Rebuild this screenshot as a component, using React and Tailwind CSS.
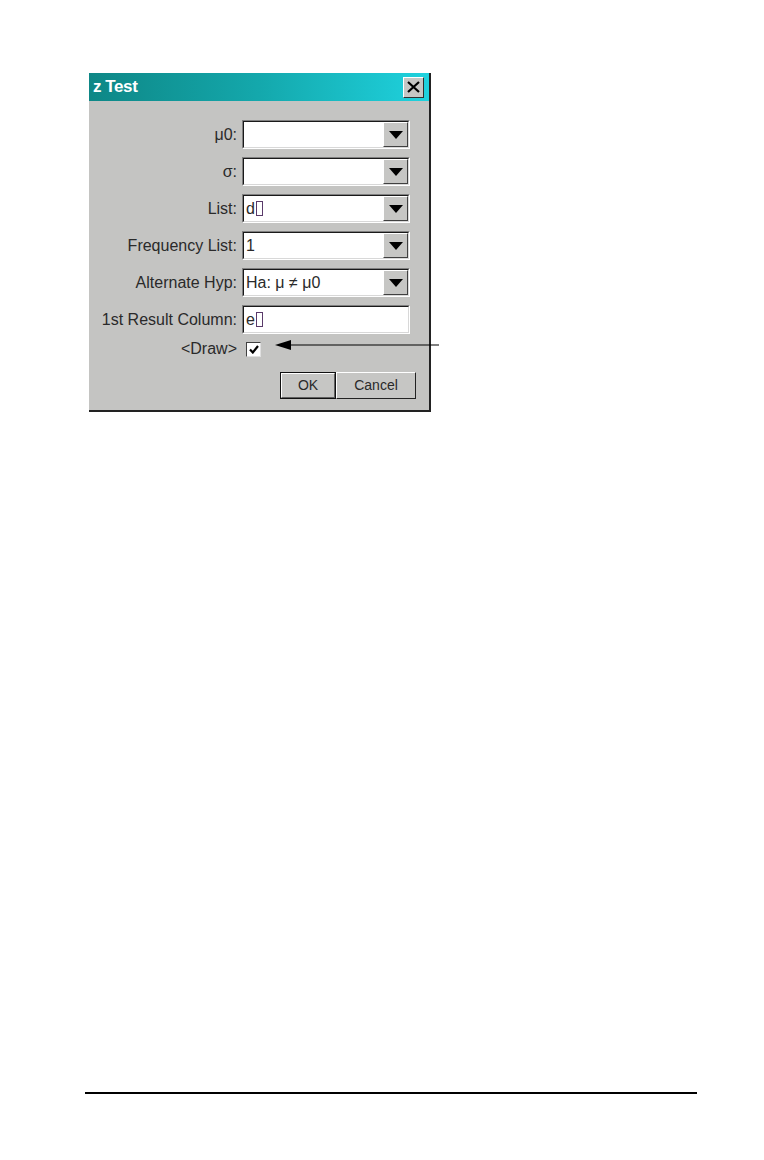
import React from 'react'

const fields = [
  { label: 'μ0:', value: '', dropdown: true },
  { label: 'σ:', value: '', dropdown: true },
  { label: 'List:', value: 'd', cursor: true, dropdown: true },
  { label: 'Frequency List:', value: '1', dropdown: true },
  { label: 'Alternate Hyp:', value: 'Ha: μ ≠ μ0', dropdown: true },
  { label: '1st Result Column:', value: 'e', cursor: true, dropdown: false },
]

function DropButton() {
  return (
    <div className="w-[25px] h-full bg-[#c6c6c4] border border-t-white border-l-white border-b-[#404040] border-r-[#404040] flex items-center justify-center">
      <svg width="14" height="8" viewBox="0 0 14 8">
        <polygon points="0,0 14,0 7,8" fill="#000" />
      </svg>
    </div>
  )
}

function Field({ value, cursor, dropdown }) {
  return (
    <div className="h-[29px] w-[168px] border border-t-[#808080] border-l-[#808080] border-b-white border-r-white">
      <div className="h-full w-full border border-t-[#1a1a1a] border-l-[#1a1a1a] border-b-[#d8d8d8] border-r-[#d8d8d8] bg-white flex items-stretch">
        <div className="flex-1 flex items-center pl-[2px] text-[16px] text-[#2a2a2a] leading-none">
          {value}
          {cursor && <span className="inline-block w-[7px] h-[15px] border border-[#5a3a6a] ml-[1px]" />}
        </div>
        {dropdown && <DropButton />}
      </div>
    </div>
  )
}

export default function App() {
  return (
    <div className="w-[764px] h-[1160px] bg-white flex flex-col" style={{ fontFamily: '"Liberation Sans", Arial, sans-serif' }}>
      <div className="ml-[89px] mt-[73px] w-[342px] h-[339px] flex flex-col bg-[#c4c4c2] border-r-2 border-b-2 border-[#222]">
        {/* Title bar */}
        <div className="h-[28px] flex items-center justify-between pl-[4px] pr-[5px] bg-gradient-to-r from-[#0e8786] via-[#14a8ac] to-[#1fd2de]">
          <span className="text-white font-bold text-[17px] tracking-tight">z Test</span>
          <div className="w-[21px] h-[21px] bg-[#c6c6c4] border border-t-white border-l-white border-b-[#303030] border-r-[#303030] flex items-center justify-center">
            <svg width="13" height="12" viewBox="0 0 13 12">
              <path d="M1 1 L12 11 M12 1 L1 11" stroke="#000" strokeWidth="2.2" />
            </svg>
          </div>
        </div>

        {/* Form */}
        <div className="flex flex-col gap-[8px] pt-[19px]">
          {fields.map((f) => (
            <div key={f.label} className="flex items-center gap-[5px]">
              <div className="w-[148px] text-right text-[16px] text-[#2a2a2a]">{f.label}</div>
              <Field value={f.value} cursor={f.cursor} dropdown={f.dropdown} />
            </div>
          ))}

          <div className="flex items-center gap-[9px] mt-[-5px]">
            <div className="w-[148px] text-right text-[16px] text-[#2a2a2a]">&lt;Draw&gt;</div>
            <div className="relative flex items-center">
              <div className="w-[15px] h-[15px] bg-white border border-t-[#404040] border-l-[#404040] border-b-[#e0e0e0] border-r-[#e0e0e0] flex items-center justify-center">
                <svg width="10" height="9" viewBox="0 0 10 9">
                  <path d="M1 4.5 L3.8 7.5 L9 1" stroke="#000" strokeWidth="2.2" fill="none" />
                </svg>
              </div>
              <svg className="absolute left-[29px] top-[-4px]" width="164" height="14" viewBox="0 0 164 14">
                <line x1="10" y1="7" x2="164" y2="7" stroke="#000" strokeWidth="1.2" />
                <polygon points="0,7 16,2 16,12" fill="#000" />
              </svg>
            </div>
          </div>

          <div className="flex justify-end pr-[13px] mt-[3px]">
            <div className="w-[56px] h-[27px] border border-[#111] bg-[#c6c6c4] flex">
              <div className="flex-1 border border-t-white border-l-white border-b-[#606060] border-r-[#606060] flex items-center justify-center text-[14px] text-[#2a2a2a]">OK</div>
            </div>
            <div className="w-[80px] h-[27px] bg-[#c6c6c4] border border-t-white border-l-white border-b-[#222] border-r-[#222] flex items-center justify-center text-[14px] text-[#2a2a2a]">Cancel</div>
          </div>
        </div>
      </div>

      <div className="flex-1" />
      <div className="ml-[85px] w-[612px] h-[2px] bg-black mb-[66px]" />
    </div>
  )
}
